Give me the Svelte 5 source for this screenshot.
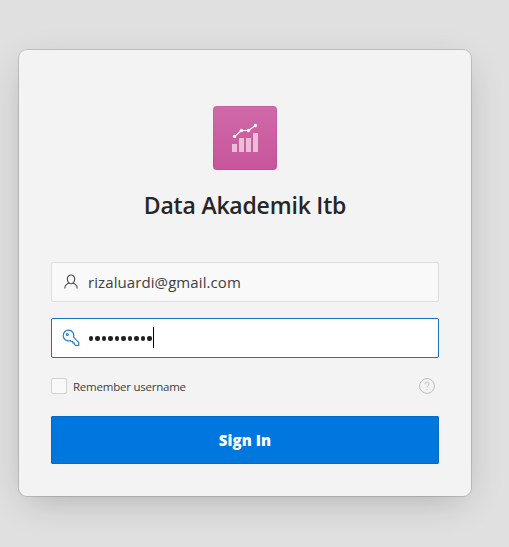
<script>
  let username = $state('rizaluardi@gmail.com');
  let remember = $state(false);
  const passwordLength = 10;
  const bars = [
    { x: 19, h: 8 },
    { x: 26, h: 14 },
    { x: 33, h: 14 },
    { x: 40, h: 19 }
  ];
  const points = [[21.6, 30.5], [28.4, 24.5], [35.5, 24.5], [42.5, 19.5]];
</script>

<main>
  <form class="card" onsubmit={(e) => e.preventDefault()}>
    <div class="logo">
      <svg width="64" height="64" viewBox="0 0 64 64" aria-hidden="true">
        {#each bars as bar}
          <rect x={bar.x} y={46 - bar.h} width="5" height={bar.h} fill="#fff" fill-opacity=".6" />
        {/each}
        <polyline points={points.join(' ')} fill="none" stroke="#fff" stroke-width="1.1" />
        {#each points as [cx, cy]}
          <circle {cx} {cy} r="1.7" fill="#fff" />
        {/each}
      </svg>
    </div>
    <h1>Data Akademik Itb</h1>

    <div class="field">
      <svg class="icon" width="16" height="16" viewBox="0 0 16 16" aria-hidden="true">
        <path d="M8 1C5.9 1 4.3 2.7 4.3 5.1C4.3 7.4 5.9 9.8 8 9.8S11.7 7.4 11.7 5.1C11.7 2.7 10.1 1 8 1ZM5.8 9L3.6 10.4C2.3 11.2 1.8 12.3 1.8 14.6M10.2 9L12.4 10.4C13.7 11.2 14.2 12.3 14.2 14.6" />
      </svg>
      <span class="value">{username}</span>
    </div>

    <div class="field active">
      <svg class="icon key" width="18" height="18" viewBox="0 0 18 18" aria-hidden="true">
        <path d="M11.5 8.2A5.3 5.3 0 1 0 8.2 11.5L9.2 12.5H10.8V14H12.3V15.3L13.6 16.5H16.7V13.4Z" />
        <circle cx="5.3" cy="5.5" r="1" />
      </svg>
      <span class="dots">
        {#each Array(passwordLength) as _}<i></i>{/each}
      </span>
      <span class="caret"></span>
    </div>

    <div class="options">
      <button type="button" class="check" aria-pressed={remember} onclick={() => (remember = !remember)}>
        <span class="box"></span><span class="label">Remember username</span>
      </button>
      <svg class="help" width="16" height="16" viewBox="0 0 16 16" aria-hidden="true">
        <circle cx="8" cy="8" r="7.4" />
        <path d="M5.9 6.3C5.9 5 6.7 4.2 8 4.2S10.1 5 10.1 6.1C10.1 7.6 8 7.7 8 9.5M8 11V12" />
      </svg>
    </div>

    <button class="submit" type="submit"><span>Sign In</span></button>
  </form>
</main>

<style>
  :global(body) {
    margin: 0;
    background: #e0e0e0;
  }
  main {
    box-sizing: border-box;
    height: 547px;
    overflow: hidden;
    padding: 50px 38px 0 19px;
    background: #e0e0e0;
    font-family: "Open Sans", "Noto Sans", sans-serif;
    color: #303030;
  }
  .card {
    box-sizing: border-box;
    height: 446px;
    padding: 56px 32px 32px;
    background: #f3f3f3;
    border-radius: 8px;
    box-shadow: 0 0 0 1px rgba(0, 0, 0, .13), 0 10px 36px -8px rgba(0, 0, 0, .23);
    display: flex;
    flex-direction: column;
  }
  .logo {
    align-self: center;
    width: 64px;
    height: 64px;
    border-radius: 4px;
    background: linear-gradient(#d069a8, #c7559b);
    box-shadow: inset 0 0 0 1px rgba(100, 20, 70, .07);
  }
  .logo svg {
    display: block;
  }
  h1 {
    margin: 19px 0 41px;
    height: 32px;
    line-height: 32px;
    text-align: center;
    font-size: 23px;
    font-weight: 600;
    letter-spacing: -.2px;
    color: #262626;
    white-space: nowrap;
  }
  .field {
    box-sizing: border-box;
    height: 40px;
    flex: none;
    display: flex;
    align-items: center;
    padding-left: 11px;
    border: 1px solid #dedede;
    border-radius: 2px;
    background: #f9f9f9;
  }
  .field + .field {
    margin-top: 16px;
  }
  .active {
    background: #fff;
    border-color: #1575bd;
  }
  .icon {
    flex: none;
    fill: none;
    stroke: #4a4a4a;
    stroke-width: 1.1;
  }
  .key {
    margin-left: -1px;
    stroke: #2381ce;
    stroke-width: 1.2;
  }
  .value {
    margin-left: 9px;
    font-size: 15px;
    letter-spacing: .09px;
    color: #404040;
  }
  .dots {
    display: flex;
    gap: 2.1px;
    margin: 1px 0 0 9px;
  }
  .dots i {
    width: 4.4px;
    height: 4.4px;
    border-radius: 50%;
    background: #222;
  }
  .caret {
    width: 1px;
    height: 21px;
    margin: 0 0 1px 1.1px;
    background: #000;
  }
  .options {
    height: 16px;
    margin: 20px 4px 22px 0;
    display: flex;
    align-items: center;
    justify-content: space-between;
  }
  button {
    font: inherit;
    border: 0;
    padding: 0;
  }
  .check {
    display: flex;
    align-items: center;
    background: none;
    color: #404040;
  }
  .box {
    box-sizing: border-box;
    width: 16px;
    height: 16px;
    border: 1px solid #d2d2d2;
    border-radius: 2px;
    background: #f9f9f9;
  }
  .label {
    margin-left: 6px;
    padding-top: 2px;
    font-size: 11.5px;
    line-height: 16px;
    letter-spacing: -.23px;
  }
  .help {
    fill: none;
    stroke: #bdbdbd;
    stroke-width: 1;
  }
  .submit {
    height: 48px;
    flex: none;
    border-radius: 2px;
    background: #0076df;
    box-shadow: inset 0 0 0 1px #056bc5;
    color: #fff;
    font-size: 15px;
    font-weight: 800;
    letter-spacing: .1px;
  }
</style>
